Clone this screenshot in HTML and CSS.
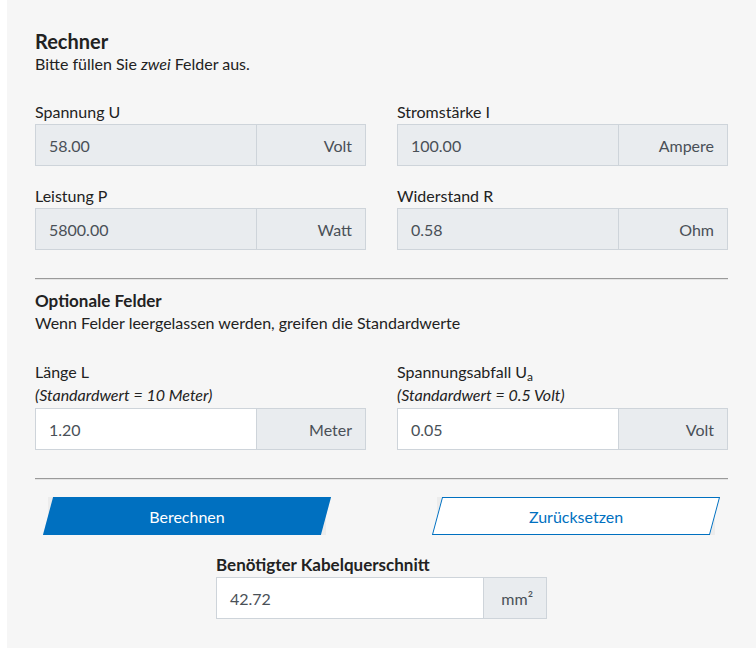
FILE: index.html
```html
<!DOCTYPE html>
<html lang="de">
<head>
<meta charset="utf-8">
<link rel="stylesheet" href="styles.css">
</head>
<body>
<div class="panel">
  <h2 class="title">Rechner</h2>
  <p class="sub">Bitte füllen Sie <em>zwei</em> Felder aus.</p>

  <div class="grid">
    <div class="field">
      <label class="label">Spannung U</label>
      <div class="group"><span class="value disabled">58.00</span><span class="unit">Volt</span></div>
    </div>
    <div class="field">
      <label class="label">Stromstärke I</label>
      <div class="group"><span class="value disabled">100.00</span><span class="unit">Ampere</span></div>
    </div>
    <div class="field">
      <label class="label">Leistung P</label>
      <div class="group"><span class="value disabled">5800.00</span><span class="unit">Watt</span></div>
    </div>
    <div class="field">
      <label class="label">Widerstand R</label>
      <div class="group"><span class="value disabled">0.58</span><span class="unit">Ohm</span></div>
    </div>
  </div>

  <hr class="sep">

  <h3 class="subtitle">Optionale Felder</h3>
  <p class="sub">Wenn Felder leergelassen werden, greifen die Standardwerte</p>

  <div class="grid optional">
    <div class="field">
      <label class="label">Länge L</label>
      <span class="hint">(Standardwert = 10 Meter)</span>
      <div class="group"><span class="value">1.20</span><span class="unit">Meter</span></div>
    </div>
    <div class="field">
      <label class="label">Spannungsabfall U<sub>a</sub></label>
      <span class="hint">(Standardwert = 0.5 Volt)</span>
      <div class="group"><span class="value">0.05</span><span class="unit">Volt</span></div>
    </div>
  </div>

  <hr class="sep">

  <div class="buttons">
    <button class="btn primary"><span>Berechnen</span></button>
    <button class="btn secondary"><span>Zurücksetzen</span></button>
  </div>

  <div class="result">
    <label class="label strong">Benötigter Kabelquerschnitt</label>
    <div class="group"><span class="value">42.72</span><span class="unit small">mm²</span></div>
  </div>
</div>
</body>
</html>
```

FILE: styles.css
```css
* { box-sizing: border-box; }
html, body { margin: 0; padding: 0; background: #ffffff; }
body {
  font-family: Lato, "Noto Sans", sans-serif;
  font-size: 16px;
  color: #222222;
  padding-left: 7px;
}
.panel {
  background: #f6f6f6;
  min-height: 648px;
  padding: 29px 28px 28px 28px;
}
.title {
  margin: 0;
  font-size: 20px;
  font-weight: 700;
  line-height: 24px;
}
.subtitle {
  margin: 0;
  font-size: 17px;
  font-weight: 700;
  line-height: 22px;
}
.sub {
  margin: 0;
  line-height: 22px;
}
.grid {
  display: grid;
  grid-template-columns: 1fr 1fr;
  column-gap: 31px;
  row-gap: 19px;
  margin-top: 26px;
}
.grid.optional { margin-top: 27px; }
.field { display: flex; flex-direction: column; }
.label { display: block; line-height: 22px; margin-bottom: 1px; color: #222; }
.label sub { font-size: 12px; vertical-align: -3px; line-height: 0; }
.hint { font-style: italic; line-height: 22px; margin-bottom: 2px; }
.group {
  display: flex;
  height: 42px;
  border: 1px solid #ced4da;
}
.value {
  flex: 1;
  background: #ffffff;
  padding: 0 13px;
  display: flex;
  align-items: center;
  color: #495057;
}
.value.disabled { background: #e9ecef; }
.unit {
  width: 109px;
  background: #e9ecef;
  border-left: 1px solid #ced4da;
  display: flex;
  align-items: center;
  justify-content: flex-end;
  padding-right: 13px;
  color: #495057;
}
.unit.small { width: 63px; }
.sep {
  margin: 28px 0 10px 0;
  border: 0;
  border-top: 1px solid #9a9a9a;
  border-bottom: 1px solid #e4e4e4;
  height: 0;
}
.buttons {
  display: flex;
  justify-content: space-between;
  padding: 7px 13px 0 13px;
}
.btn {
  position: relative;
  width: 278px;
  height: 38px;
  border: 0;
  padding: 0;
  background: #ececec;
  font-family: inherit;
  font-size: 16px;
  cursor: pointer;
}
.btn::before {
  content: "";
  position: absolute;
  inset: 0;
  transform: skewX(-15deg);
}
.btn span { position: relative; }
.btn.primary::before { background: #0070c0; }
.btn.primary { color: #ffffff; }
.btn.secondary::before { background: #ffffff; border: 1px solid #0070c0; }
.btn.secondary { color: #0070c0; }
.result {
  width: 331px;
  margin: 19px auto 0 auto;
}
.label.strong { font-weight: 700; font-size: 17px; }
```
